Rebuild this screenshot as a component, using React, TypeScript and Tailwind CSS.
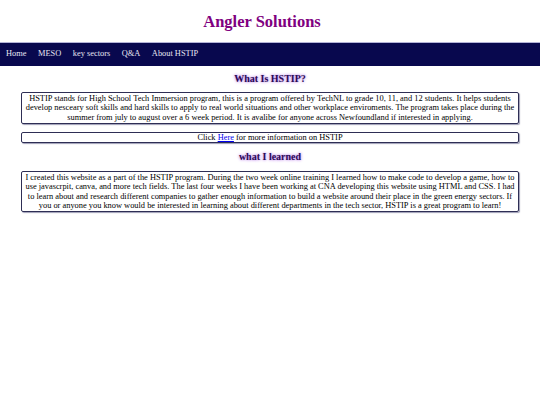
const navItems = ["Home", "MESO", "key sectors", "Q&A", "About HSTIP"];

const App = () => {
  return (
    <div className="min-h-[405px] bg-white font-['Liberation_Serif',serif] text-black">
      {/* Title */}
      <h1 className="pt-[12px] pb-[11px] pr-[16px] text-center text-[16.5px] leading-[19px] font-bold text-[#800080]">
        Angler Solutions
      </h1>

      {/* Nav */}
      <nav className="flex h-[24px] items-center gap-[11.5px] border-t border-[#b4b4d8] bg-[#08084e] px-[6px] text-[8.4px] text-[#e6e6f2]">
        {navItems.map((item) => (
          <a key={item} href="#">
            {item}
          </a>
        ))}
      </nav>

      {/* What is HSTIP */}
      <h3 className="mt-[7px] mb-[7px] text-center text-[10px] leading-[12px] font-bold text-[#2a0a55] [text-shadow:0_0_3px_#a050e0]">
        What Is HSTIP?
      </h3>
      <div className="mx-[21px] rounded-[2px] border border-[#2e2e55] px-[2px] py-[1px] text-center text-[8.4px] leading-[9.3px] shadow-[1px_1px_1px_rgba(60,60,110,0.5)]">
        HSTIP stands for High School Tech Immersion program, this is a program offered by TechNL to grade 10, 11, and 12 students. It helps students
        develop nesceary soft skills and hard skills to apply to real world situations and other workplace enviroments. The program takes place during the
        summer from july to august over a 6 week period. It is avalibe for anyone across Newfoundland if interested in applying.
      </div>

      <div className="mx-[21px] mt-[8px] rounded-[2px] border border-[#2e2e55] text-center text-[8.4px] leading-[9.3px] shadow-[1px_1px_1px_rgba(60,60,110,0.5)]">
        Click{" "}
        <a href="#" className="text-[#0000ee] underline">
          Here
        </a>{" "}
        for more information on HSTIP
      </div>

      {/* What I learned */}
      <h3 className="mt-[8px] mb-[8px] text-center text-[10px] leading-[12px] font-bold text-[#2a0a55] [text-shadow:0_0_3px_#a050e0]">
        what I learned
      </h3>
      <div className="mx-[21px] rounded-[2px] border border-[#2e2e55] px-[2px] py-[1px] text-center text-[8.4px] leading-[9.3px] shadow-[1px_1px_1px_rgba(60,60,110,0.5)]">
        I created this website as a part of the HSTIP program. During the two week online training I learned how to make code to develop a game, how to
        use javascrpit, canva, and more tech fields. The last four weeks I have been working at CNA developing this website using HTML and CSS. I had
        to learn about and research different companies to gather enough information to build a website around their place in the green energy sectors. If
        you or anyone you know would be interested in learning about different departments in the tech sector, HSTIP is a great program to learn!
      </div>
    </div>
  );
};

export default App;
